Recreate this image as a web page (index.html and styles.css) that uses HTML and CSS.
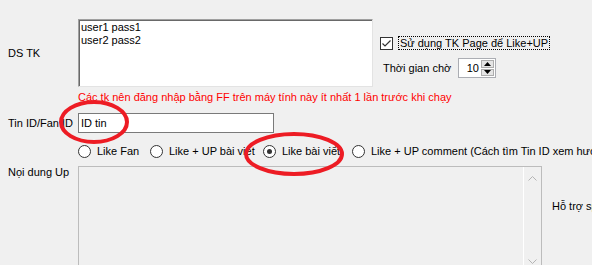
FILE: index.html
```html
<!DOCTYPE html>
<html lang="vi">
<head>
    <meta charset="UTF-8">
    <meta name="viewport" content="width=device-width, initial-scale=1.0">
    <title>Like UP</title>
    <link rel="stylesheet" href="styles.css">
</head>
<body>
    <div class="form">
        <div class="row row-acc">
            <div class="lbl">DS TK</div>
            <div class="accounts">user1 pass1<br>user2 pass2</div>
            <div class="side">
                <div class="check">
                    <span class="box">
                        <svg width="11" height="11" viewBox="0 0 11 11"><path d="M1.5 5.5 L4 8 L9.5 2.5" fill="none" stroke="#333" stroke-width="1.2"/></svg>
                    </span>
                    <span class="focus">Sử dụng TK Page để Like+UP</span>
                </div>
                <div class="wait">
                    <span class="wait-lbl">Thời gian chờ</span>
                    <div class="spin">
                        <span class="num">10</span>
                        <div class="btns">
                            <span class="btn"><svg width="7" height="4" viewBox="0 0 7 4"><path d="M0 4 L3.5 0 L7 4 Z" fill="#000"/></svg></span>
                            <span class="btn"><svg width="7" height="4" viewBox="0 0 7 4"><path d="M0 0 L3.5 4 L7 0 Z" fill="#000"/></svg></span>
                        </div>
                    </div>
                </div>
            </div>
        </div>
        <p class="note">Các tk nên đăng nhập bằng FF trên máy tính này ít nhất 1 lần trước khi chạy</p>
        <div class="row row-id">
            <div class="lbl">Tin ID/Fan ID</div>
            <div class="id-input">ID tin</div>
        </div>
        <div class="opts">
            <div class="opt opt-fan"><span class="radio"></span>Like Fan</div>
            <div class="opt opt-post"><span class="radio"></span>Like + UP bài viết</div>
            <div class="opt opt-like"><span class="radio on"></span>Like bài viết</div>
            <div class="opt"><span class="radio"></span>Like + UP comment (Cách tìm Tin ID xem hướn</div>
        </div>
        <div class="row row-content">
            <div class="lbl">Nọi dung Up</div>
            <div class="content-box">
                <div class="scroll">
                    <svg width="9" height="5" viewBox="0 0 9 5"><path d="M0.5 4.5 L4.5 0.5 L8.5 4.5" fill="none" stroke="#b4b4b4"/></svg>
                    <svg width="9" height="5" viewBox="0 0 9 5"><path d="M0.5 0.5 L4.5 4.5 L8.5 0.5" fill="none" stroke="#b4b4b4"/></svg>
                </div>
            </div>
            <div class="help">Hỗ trợ sp</div>
        </div>
    </div>
    <svg class="marks" width="592" height="265" viewBox="0 0 592 265">
        <ellipse cx="94" cy="122" rx="33" ry="20" fill="none" stroke="#ed1c24" stroke-width="4"/>
        <ellipse cx="294" cy="154" rx="48" ry="20" fill="none" stroke="#ed1c24" stroke-width="4"/>
    </svg>
</body>
</html>
```

FILE: styles.css
```css
body {
    margin: 0;
    width: 592px;
    height: 265px;
    overflow: hidden;
    position: relative;
    background: #f0f0f0;
    font-family: "Liberation Sans", Arial, sans-serif;
    font-size: 11px;
    line-height: 13px;
    color: #000;
}
.form {
    padding: 19px 0 0 8px;
}
.row {
    display: flex;
}
.lbl {
    width: 70px;
    flex: none;
    white-space: nowrap;
}
.row-acc {
    align-items: center;
}
.accounts {
    width: 295px;
    height: 68px;
    box-sizing: border-box;
    padding: 1px 2px;
    background: #fff;
    border: 1px solid;
    border-color: #a0a0a0 #e3e3e3 #e3e3e3 #a0a0a0;
    box-shadow: inset 1px 1px 0 #696969;
    flex: none;
}
.side {
    align-self: flex-start;
    margin-left: 7px;
    padding-top: 17px;
    white-space: nowrap;
}
.check {
    display: flex;
    align-items: center;
}
.box {
    width: 13px;
    height: 13px;
    box-sizing: border-box;
    border: 1px solid #333;
    background: #fff;
    display: flex;
}
.focus {
    margin-left: 5px;
    padding: 0 1px;
    border: 1px dotted #000;
    line-height: 12px;
}
.wait {
    display: flex;
    align-items: center;
    margin-top: 8px;
    padding-left: 3px;
}
.wait-lbl {
    width: 75px;
}
.spin {
    width: 38px;
    height: 20px;
    box-sizing: border-box;
    border: 1px solid #abadb3;
    background: #fff;
    display: flex;
}
.num {
    flex: 1;
    text-align: right;
    line-height: 18px;
    padding-right: 1px;
}
.btns {
    width: 13px;
    margin: 1px;
    display: flex;
    flex-direction: column;
    gap: 1px;
}
.btn {
    flex: 1;
    display: flex;
    align-items: center;
    justify-content: center;
    background: #e5e5e5;
    border: 1px solid #adadad;
}
.note {
    margin: 4px 0 0 70px;
    color: #f00;
    white-space: nowrap;
}
.row-id {
    align-items: center;
    margin-top: 9px;
}
.id-input {
    width: 196px;
    height: 20px;
    box-sizing: border-box;
    padding: 0 2px;
    border: 1px solid #7a7a7a;
    background: #fff;
    line-height: 18px;
}
.opts {
    display: flex;
    margin: 12px 0 0 70px;
    white-space: nowrap;
}
.opt {
    display: flex;
    align-items: center;
    gap: 6px;
    flex: none;
}
.opt-fan {
    width: 72px;
}
.opt-post {
    width: 113px;
}
.opt-like {
    width: 89px;
}
.radio {
    width: 13px;
    height: 13px;
    box-sizing: border-box;
    border: 1px solid #333;
    border-radius: 50%;
    background: #fff;
    flex: none;
    display: flex;
    align-items: center;
    justify-content: center;
}
.radio.on::after {
    content: "";
    width: 5px;
    height: 5px;
    border-radius: 50%;
    background: #333;
}
.row-content {
    margin-top: 8px;
}
.content-box {
    width: 464px;
    height: 100px;
    box-sizing: border-box;
    border: 1px solid #bcbcbc;
    border-bottom: none;
    background: #f0f0f0;
    display: flex;
    justify-content: flex-end;
    flex: none;
}
.scroll {
    width: 17px;
    border-left: 1px solid #fff;
    display: flex;
    flex-direction: column;
    align-items: center;
    justify-content: space-between;
    padding: 9px 0 2px;
}
.help {
    margin: 34px 0 0 10px;
    white-space: nowrap;
}
.marks {
    position: absolute;
    top: 0;
    left: 0;
    pointer-events: none;
}
```
